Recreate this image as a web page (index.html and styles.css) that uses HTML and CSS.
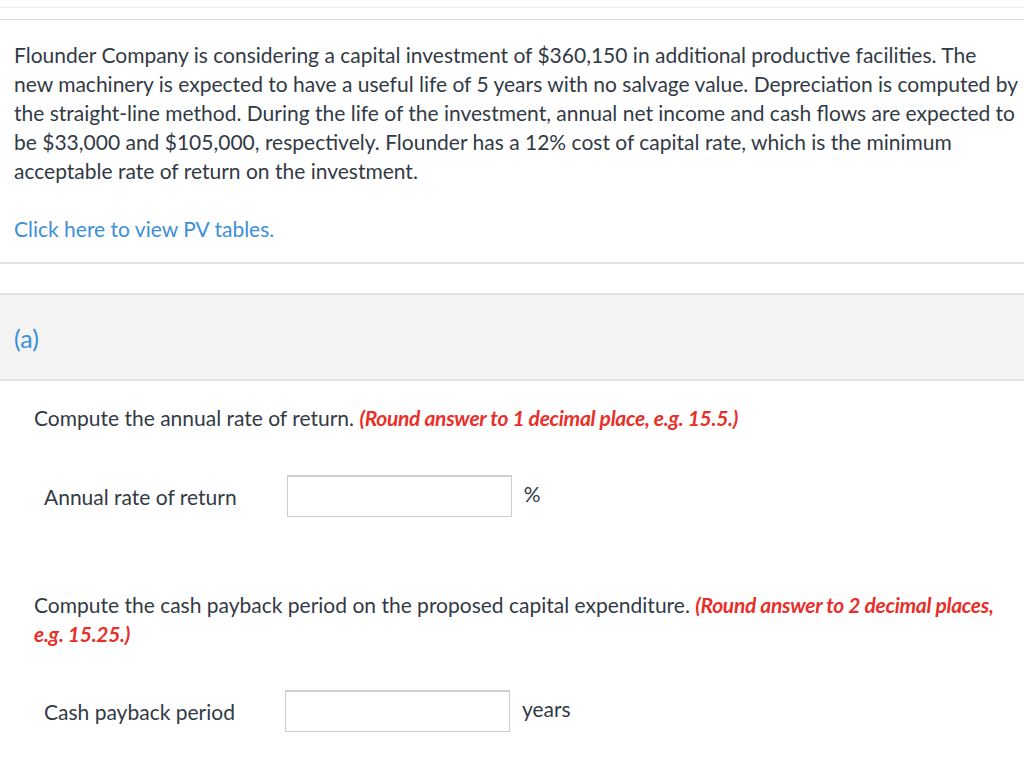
FILE: index.html
```html
<!DOCTYPE html>
<html>
<head>
<meta charset="utf-8">
<link rel="stylesheet" href="styles.css">
</head>
<body>
<div class="topbar"></div>
<div class="problem">
  <p class="intro">Flounder Company is considering a capital investment of $360,150 in additional productive facilities. The new machinery is expected to have a useful life of 5 years with no salvage value. Depreciation is computed by the straight-line method. During the life of the investment, annual net income and cash flows are expected to be $33,000 and $105,000, respectively. Flounder has a 12% cost of capital rate, which is the minimum acceptable rate of return on the investment.</p>
  <p class="link-row"><a class="link" href="#">Click here to view PV tables.</a></p>
</div>
<div class="spacer"></div>
<div class="part-head"><span class="part-label">(a)</span></div>
<div class="part-body">
  <p class="question">Compute the annual rate of return. <span class="hint">(Round answer to 1 decimal place, e.g. 15.5.)</span></p>
  <div class="answer-row row1">
    <span class="label">Annual rate of return</span>
    <input class="box" type="text">
    <span class="unit">%</span>
  </div>
  <p class="question q2">Compute the cash payback period on the proposed capital expenditure. <span class="hint">(Round answer to 2 decimal places, e.g. 15.25.)</span></p>
  <div class="answer-row row2">
    <span class="label">Cash payback period</span>
    <input class="box" type="text">
    <span class="unit">years</span>
  </div>
</div>
</body>
</html>
```
FILE: styles.css
```css
html, body {
  margin: 0;
  padding: 0;
  background: #fff;
}
body {
  font-family: Lato, "Liberation Sans", sans-serif;
  color: #323a45;
  font-size: 21px;
}
.topbar {
  height: 11px;
  border-top: 1px solid #ececec;
  border-bottom: 1px solid #dcdcdc;
  margin-top: 7px;
}
.problem {
  padding: 0 4px 0 14px;
}
.intro {
  margin: 20px 0 0;
  line-height: 29px;
}
.link-row {
  margin: 29px 0 0;
  line-height: 29px;
}
.link {
  color: #3d8fd8;
  text-decoration: none;
}
.spacer {
  margin-top: 19px;
  height: 29px;
  border-top: 2px solid #e2e2e2;
}
.part-head {
  background: #f4f4f4;
  border-top: 2px solid #e2e2e2;
  border-bottom: 2px solid #e2e2e2;
  height: 88px;
  display: flex;
  align-items: center;
  padding-left: 14px;
  box-sizing: border-box;
}
.part-label {
  color: #3d8fd8;
  font-size: 25px;
  margin-top: 1px;
}
.part-body {
  padding: 0 20px 0 34px;
}
.question {
  margin: 22px 0 0;
  line-height: 29px;
}
.hint {
  color: #e8302a;
  font-weight: bold;
  font-style: italic;
  letter-spacing: -0.3px;
}
.answer-row {
  display: flex;
  align-items: center;
  padding-left: 10px;
}
.row1 {
  margin-top: 43px;
}
.row2 {
  margin-top: 42px;
}
.box {
  height: 42px;
  width: 225px;
  box-sizing: border-box;
  border: 1px solid #ccc;
  border-top: 2px solid #cfcfcf;
  margin: 0 0 0 50px;
  padding: 0;
  background: #fff;
}
.unit {
  align-self: flex-start;
  margin-top: 6px;
  margin-left: 12px;
}
.q2 {
  margin-top: 73px;
}
```
